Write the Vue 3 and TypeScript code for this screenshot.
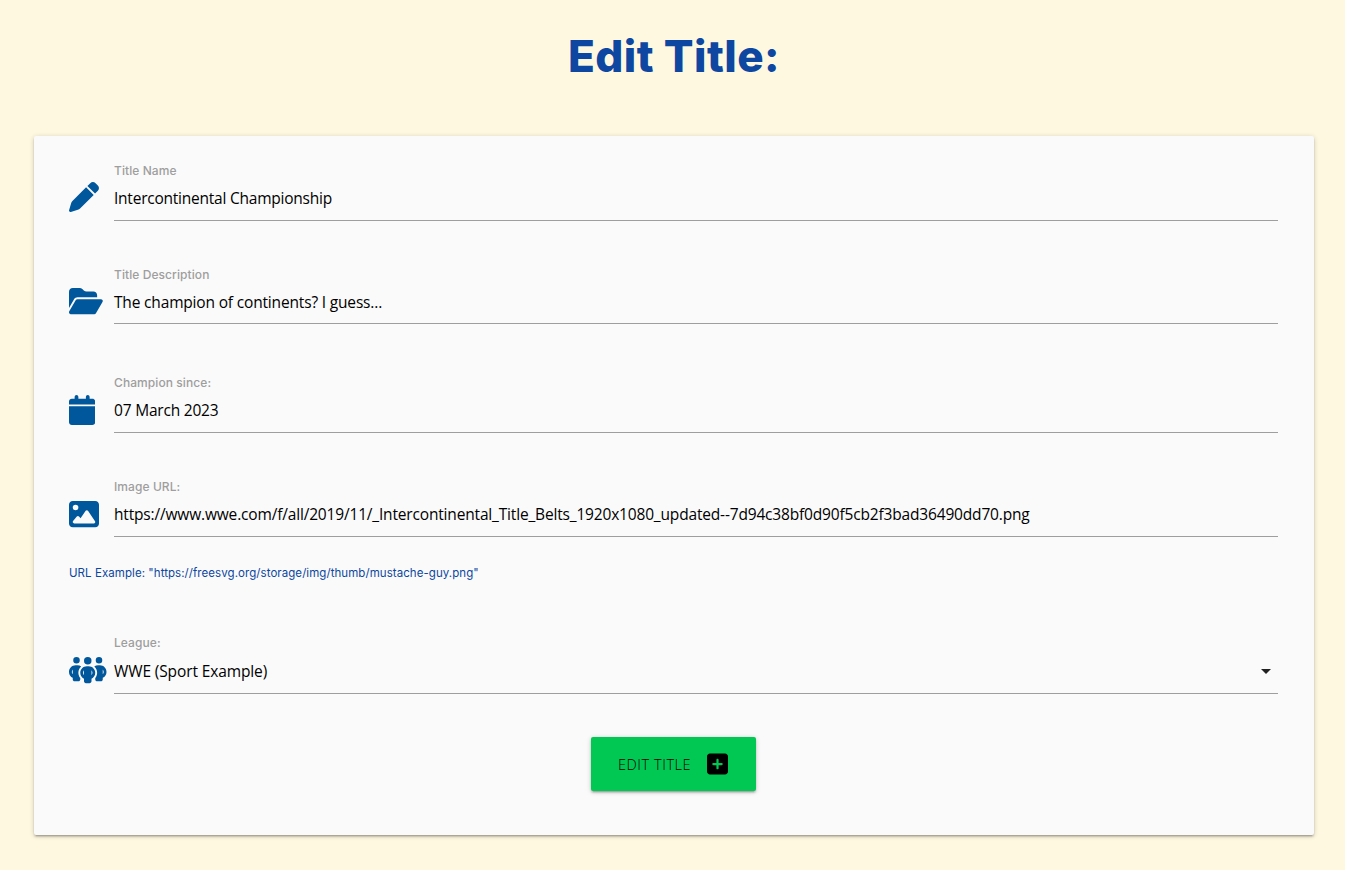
<script setup lang="ts">
interface Field {
  key: string
  label: string
  value: string
  viewBox: string
  path: string
  hint?: string
  select?: boolean
}

const fields: Field[] = [
  {
    key: 'name',
    label: 'Title Name',
    value: 'Intercontinental Championship',
    viewBox: '0 0 512 512',
    path: 'M362.7 19.3L314.3 67.7 444.3 197.7l48.4-48.4c25-25 25-65.5 0-90.5L453.3 19.3c-25-25-65.5-25-90.5 0zm-71 71L58.6 323.5c-10.4 10.4-18 23.3-22.2 37.4L1 481.2C-1.5 489.7 .8 498.8 7 505s15.3 8.5 23.7 6.1l120.3-35.4c14.1-4.2 27-11.8 37.4-22.2L421.7 220.3 291.7 90.3z',
  },
  {
    key: 'description',
    label: 'Title Description',
    value: 'The champion of continents? I guess...',
    viewBox: '0 0 576 512',
    path: 'M88.7 223.8L0 375.8V96C0 60.7 28.7 32 64 32H181.5c17 0 33.3 6.7 45.3 18.7l26.5 26.5c12 12 28.3 18.7 45.3 18.7H416c35.3 0 64 28.7 64 64v32H144c-22.8 0-43.8 12.1-55.3 31.8zm27.6 16.1C122.1 230 132.6 224 144 224H544c11.5 0 22 6.1 27.7 16.1s5.7 22.2-.1 32.1l-112 192C453.9 474 443.4 480 432 480H32c-11.5 0-22-6.1-27.7-16.1s-5.7-22.2 .1-32.1l112-192z',
  },
  {
    key: 'since',
    label: 'Champion since:',
    value: '07 March 2023',
    viewBox: '0 0 448 512',
    path: 'M96 32V64H48C21.5 64 0 85.5 0 112v48H448V112c0-26.5-21.5-48-48-48H352V32c0-17.7-14.3-32-32-32s-32 14.3-32 32V64H160V32c0-17.7-14.3-32-32-32S96 14.3 96 32zM448 192H0V464c0 26.5 21.5 48 48 48H400c26.5 0 48-21.5 48-48V192z',
  },
  {
    key: 'image',
    label: 'Image URL:',
    value: 'https://www.wwe.com/f/all/2019/11/_Intercontinental_Title_Belts_1920x1080_updated--7d94c38bf0d90f5cb2f3bad36490dd70.png',
    viewBox: '0 0 512 512',
    path: 'M0 96C0 60.7 28.7 32 64 32H448c35.3 0 64 28.7 64 64V416c0 35.3-28.7 64-64 64H64c-35.3 0-64-28.7-64-64V96zM323.8 202.5c-4.5-6.6-11.9-10.5-19.8-10.5s-15.4 3.9-19.8 10.5l-87 127.6L170.7 297c-4.6-5.7-11.5-9-18.7-9s-14.2 3.3-18.7 9l-64 80c-5.8 7.2-6.9 17.1-2.9 25.4s12.4 13.6 21.6 13.6h96 32H424c8.9 0 17.1-4.9 21.2-12.8s3.6-17.4-1.4-24.7l-120-176zM112 192a48 48 0 1 0 0-96 48 48 0 1 0 0 96z',
    hint: 'URL Example: "https://freesvg.org/storage/img/thumb/mustache-guy.png"',
  },
  {
    key: 'league',
    label: 'League:',
    value: 'WWE (Sport Example)',
    viewBox: '0 0 640 512',
    path: 'M72 88a56 56 0 1 1 112 0A56 56 0 1 1 72 88zM64 245.7C54 256.9 48 271.8 48 288s6 31.1 16 42.3V245.7zm144.4-49.3C178.7 222.7 160 261.2 160 304c0 34.3 12 65.8 32 90.5V416c0 17.7-14.3 32-32 32H96c-17.7 0-32-14.3-32-32V389.2C26.2 371.2 0 332.7 0 288c0-61.9 50.1-112 112-112h32c24 0 46.2 7.5 64.4 20.3zM448 416V394.5c20-24.7 32-56.2 32-90.5c0-42.8-18.7-81.3-48.4-107.7C449.8 183.5 472 176 496 176h32c61.9 0 112 50.1 112 112c0 44.7-26.2 83.2-64 101.2V416c0 17.7-14.3 32-32 32H480c-17.7 0-32-14.3-32-32zm8-328a56 56 0 1 1 112 0A56 56 0 1 1 456 88zM576 245.7v84.7c10-11.3 16-26.1 16-42.3s-6-31.1-16-42.3zM320 32a64 64 0 1 1 0 128 64 64 0 1 1 0-128zM240 304c0 16.2 6 31 16 42.3V261.7c-10 11.3-16 26.1-16 42.3zm144-42.3v84.7c10-11.3 16-26.1 16-42.3s-6-31.1-16-42.3zM448 304c0 44.7-26.2 83.2-64 101.2V448c0 17.7-14.3 32-32 32H288c-17.7 0-32-14.3-32-32V405.2c-37.8-18-64-56.5-64-101.2c0-61.9 50.1-112 112-112h32c61.9 0 112 50.1 112 112z',
    select: true,
  },
]
</script>

<template>
  <main class="page">
    <h1 class="heading"><span>Edit Title:</span></h1>
    <form class="card" @submit.prevent>
      <div v-for="f in fields" :key="f.key" class="group" :class="f.key">
        <div class="field">
          <div class="icon">
            <svg :viewBox="f.viewBox" height="30" aria-hidden="true"><path :d="f.path" /></svg>
          </div>
          <div class="body">
            <label class="label"><span>{{ f.label }}</span></label>
            <div class="control">
              <span class="value">{{ f.value }}</span>
              <svg v-if="f.select" class="caret" viewBox="0 0 24 24" width="24" height="24" aria-hidden="true">
                <path d="M7 10l5 5 5-5z" />
              </svg>
            </div>
          </div>
        </div>
        <p v-if="f.hint" class="hint"><span>{{ f.hint }}</span></p>
      </div>
      <button class="submit" type="submit">
        <span class="submit-text">EDIT TITLE</span>
        <svg viewBox="0 0 448 512" width="21" height="24" aria-hidden="true">
          <path d="M64 32C28.7 32 0 60.7 0 96V416c0 35.3 28.7 64 64 64H384c35.3 0 64-28.7 64-64V96c0-35.3-28.7-64-64-64H64zM200 344V280H136c-13.3 0-24-10.7-24-24s10.7-24 24-24h64V168c0-13.3 10.7-24 24-24s24 10.7 24 24v64h64c13.3 0 24 10.7 24 24s-10.7 24-24 24H248v64c0 13.3-10.7 24-24 24s-24-10.7-24-24z" />
        </svg>
      </button>
    </form>
  </main>
</template>

<style>
html,
body {
  margin: 0;
  background: #fff8e1;
}
</style>

<style scoped>
.page {
  box-sizing: border-box;
  height: 870px;
  padding: 28px 31px 0 34px;
  background: #fff8e1;
  font-family: Inter, "Liberation Sans", sans-serif;
  overflow: hidden;
}
.heading {
  margin: 0 0 52px;
  height: 56px;
  line-height: 56px;
  text-align: center;
  font-size: 44px;
  font-weight: 800;
  letter-spacing: 0.4px;
  color: #0d47a1;
}
.card {
  box-sizing: border-box;
  display: flex;
  flex-direction: column;
  height: 699px;
  padding: 27px 36px 0 35px;
  background: #fafafa;
  border-radius: 2px;
  box-shadow: 0 2px 2px 0 rgba(0, 0, 0, 0.14), 0 3px 1px -2px rgba(0, 0, 0, 0.12), 0 1px 5px 0 rgba(0, 0, 0, 0.2);
}
.group {
  margin-bottom: 46px;
}
.description {
  margin-bottom: 51px;
}
.name {
  margin-bottom: 45px;
}
.league {
  margin-bottom: 43px;
}
.field {
  display: flex;
  height: 58px;
}
.icon {
  width: 45px;
  padding-top: 19.6px;
}
.name .icon {
  padding-top: 19px;
}
.league .icon {
  padding-top: 18.5px;
}
.icon svg {
  display: block;
  fill: #01579b;
}
.body {
  flex: 1;
  border-bottom: 1px solid #9e9e9e;
}
.label {
  display: block;
  height: 16px;
  line-height: 16px;
  font-size: 12px;
  font-weight: 450;
  letter-spacing: 0.08px;
  color: #9e9e9e;
}
.description .label {
  line-height: 18px;
}
.league .label {
  line-height: 14px;
}
.control {
  display: flex;
  align-items: center;
  justify-content: space-between;
  height: 37px;
}
.description .control {
  height: 39px;
}
.value {
  font-family: "Open Sans", "Noto Sans", sans-serif;
  font-size: 15.5px;
  line-height: 22px;
  letter-spacing: -0.17px;
  color: #000;
  white-space: nowrap;
}
.name .value {
  letter-spacing: -0.23px;
}
.since .value {
  letter-spacing: -0.2px;
}
.league .value {
  letter-spacing: -0.12px;
}
.caret {
  fill: #212121;
}
.hint {
  margin: 28px 0 0;
  height: 17px;
  line-height: 17px;
  font-size: 11.5px;
  letter-spacing: 0.065px;
  color: #0d47a1;
}
.image {
  margin-bottom: 54px;
}
.submit {
  display: flex;
  align-items: center;
  justify-content: space-between;
  box-sizing: border-box;
  width: 165px;
  height: 54px;
  margin: 0 auto;
  padding: 0 28px 0 27px;
  border: 0;
  border-radius: 2px;
  background: #00c853;
  color: #000;
  font-family: "Open Sans", "Noto Sans", sans-serif;
  font-size: 14.5px;
  font-weight: 350;
  letter-spacing: 0.55px;
  box-shadow: 0 2px 2px 0 rgba(0, 0, 0, 0.14), 0 3px 1px -2px rgba(0, 0, 0, 0.12), 0 1px 5px 0 rgba(0, 0, 0, 0.2);
}
</style>
